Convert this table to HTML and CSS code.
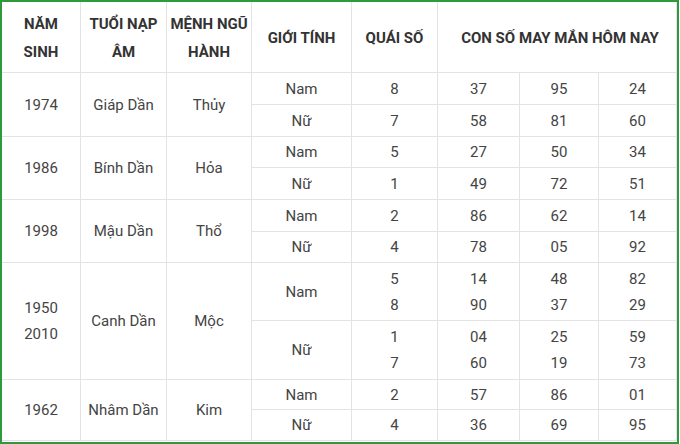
FILE: index.html
```html
<!DOCTYPE html>
<html lang="vi">
<head>
<meta charset="utf-8">
<link rel="stylesheet" href="styles.css">
</head>
<body>
<div class="frame">
<table class="lucky">
  <colgroup>
    <col class="c1"><col class="c2"><col class="c3"><col class="c4"><col class="c5"><col class="c6"><col class="c7"><col class="c8">
  </colgroup>
  <thead>
    <tr class="head">
      <th>NĂM<br>SINH</th>
      <th>TUỔI NẠP<br>ÂM</th>
      <th>MỆNH NGŨ<br>HÀNH</th>
      <th>GIỚI TÍNH</th>
      <th>QUÁI SỐ</th>
      <th colspan="3" class="lucky-head">CON SỐ MAY MẮN HÔM NAY</th>
    </tr>
  </thead>
  <tbody>
    <tr class="r32"><td rowspan="2">1974</td><td rowspan="2">Giáp Dần</td><td rowspan="2">Thủy</td><td>Nam</td><td>8</td><td>37</td><td>95</td><td>24</td></tr>
    <tr class="r32"><td>Nữ</td><td>7</td><td>58</td><td>81</td><td>60</td></tr>
    <tr class="r31"><td rowspan="2">1986</td><td rowspan="2">Bính Dần</td><td rowspan="2">Hỏa</td><td>Nam</td><td>5</td><td>27</td><td>50</td><td>34</td></tr>
    <tr class="r32"><td>Nữ</td><td>1</td><td>49</td><td>72</td><td>51</td></tr>
    <tr class="r32"><td rowspan="2">1998</td><td rowspan="2">Mậu Dần</td><td rowspan="2">Thổ</td><td>Nam</td><td>2</td><td>86</td><td>62</td><td>14</td></tr>
    <tr class="r31"><td>Nữ</td><td>4</td><td>78</td><td>05</td><td>92</td></tr>
    <tr class="r58"><td rowspan="2" class="multi">1950<br>2010</td><td rowspan="2">Canh Dần</td><td rowspan="2">Mộc</td><td>Nam</td><td class="multi">5<br>8</td><td class="multi">14<br>90</td><td class="multi">48<br>37</td><td class="multi">82<br>29</td></tr>
    <tr class="r59"><td>Nữ</td><td class="multi">1<br>7</td><td class="multi">04<br>60</td><td class="multi">25<br>19</td><td class="multi">59<br>73</td></tr>
    <tr class="r30"><td rowspan="2">1962</td><td rowspan="2">Nhâm Dần</td><td rowspan="2">Kim</td><td>Nam</td><td>2</td><td>57</td><td>86</td><td>01</td></tr>
    <tr class="r31"><td>Nữ</td><td>4</td><td>36</td><td>69</td><td>95</td></tr>
  </tbody>
</table>
</div>
</body>
</html>
```

FILE: styles.css
```css
html, body {
  margin: 0;
  padding: 0;
  background: #ffffff;
}

.frame {
  width: 675px;
  height: 440px;
  border: 2px solid #2f9a3c;
  overflow: hidden;
  background: #ffffff;
}

.lucky {
  width: 675px;
  border-collapse: collapse;
  table-layout: fixed;
  font-family: Roboto, "Liberation Sans", sans-serif;
  font-size: 15px;
  color: #444444;
  margin-top: -1px;
  margin-left: -1px;
}

.c1 { width: 79px; }
.c2 { width: 86px; }
.c3 { width: 85px; }
.c4 { width: 100px; }
.c5 { width: 86px; }
.c6 { width: 82px; }
.c7 { width: 79px; }
.c8 { width: 78px; }

.lucky th,
.lucky td {
  border: 1px solid #e3e3e6;
  text-align: center;
  vertical-align: middle;
  padding: 0;
}

.head th {
  height: 68px;
  font-weight: 700;
  font-size: 15px;
  color: #333333;
  line-height: 28px;
  padding-top: 2px;
}

.head th.lucky-head {
  padding-left: 6px;
}

.lucky td {
  line-height: 20px;
}

.lucky td.multi {
  line-height: 26px;
}

.r30 td { height: 29px; }
.r31 td { height: 30px; }
.r32 td { height: 31px; }
.r58 td { height: 57px; }
.r59 td { height: 58px; }
```
